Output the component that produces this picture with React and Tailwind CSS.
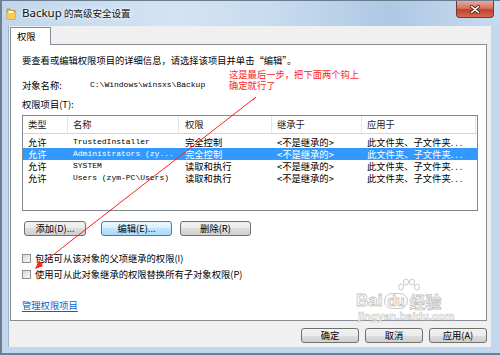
import React from "react";

const rows = [
  { type: "允许", name: "TrustedInstaller", perm: "完全控制", from: "<不是继承的>", to: "此文件夹、子文件夹..." },
  { type: "允许", name: "Administrators (zy...", perm: "完全控制", from: "<不是继承的>", to: "此文件夹、子文件夹...", selected: true },
  { type: "允许", name: "SYSTEM", perm: "读取和执行", from: "<不是继承的>", to: "此文件夹、子文件夹..." },
  { type: "允许", name: "Users (zym-PC\\Users)", perm: "读取和执行", from: "<不是继承的>", to: "此文件夹、子文件夹..." },
];

const btn =
  "h-[15px] rounded-[3px] border border-[#707070] bg-[linear-gradient(#f2f2f2,#ebebeb_50%,#dddddd_50%,#cfcfcf)] flex items-center justify-center leading-none text-[9.3px] text-black";

function Checkbox({ label }) {
  return (
    <div className="flex items-center h-[12px]">
      <span className="w-[9px] h-[9px] border border-[#8e8f8f] bg-[linear-gradient(135deg,#d6d6d6,#fbfbfb)]" />
      <span className="ml-[4px] leading-[12px]">{label}</span>
    </div>
  );
}

export default function App() {
  return (
    <div className="relative w-[500px] h-[355px] overflow-hidden flex flex-col bg-[#c3d8ee] border-b-2 border-l-2 border-[#6f7f90] font-['Noto_Sans_CJK_SC','Noto_Sans',sans-serif] text-[9.3px] text-black">
      {/* title bar */}
      <div className="h-[26px] flex items-start bg-[linear-gradient(90deg,#c0d6ec,#d3e3f3_35%,#c7dbef_55%,#aec8e4_78%,#c8dbef)] border-t border-[#6a7c8e]">
        <div className="h-[24px] flex items-center pl-[4px]">
          <svg width="10" height="13" viewBox="0 0 10 13">
            <path d="M1 2h3l1 1.5h4v9H1z" fill="#e8b83a" stroke="#b8861c" strokeWidth="0.8" />
            <rect x="2.5" y="4" width="5" height="7" fill="#fffbe9" />
            <path d="M1 6h8v6.5H1z" fill="#f4cd58" />
          </svg>
          <span className="ml-[6px] leading-none text-[9.5px] text-[#111] [text-shadow:0_0_6px_#ffffff,0_0_3px_#ffffff]">
            <span className="font-['Noto_Sans',sans-serif] text-[11.5px]">Backup</span> 的高级安全设置
          </span>
        </div>
        <div className="ml-auto mr-[6px] w-[38px] h-[17px] rounded-b-[4px] border border-t-0 border-[#6d3a33] bg-[linear-gradient(#e7ab9d,#d6735f_45%,#c2412d_55%,#d56a52)] flex items-center justify-center">
          <svg width="12" height="9" viewBox="0 0 12 9">
            <path d="M2.5 1.5l7 6M9.5 1.5l-7 6" stroke="#5a2018" strokeWidth="3.2" strokeLinecap="round" />
            <path d="M2.5 1.5l7 6M9.5 1.5l-7 6" stroke="#ffffff" strokeWidth="1.6" strokeLinecap="round" />
          </svg>
        </div>
      </div>

      {/* client area */}
      <div className="flex-1 ml-[6px] mr-[9px] mb-[6px] bg-[#f0f0f0] border-l border-[#a4b4c4] flex flex-col pt-[1px]">
        <div className="ml-[1px] flex">
          <div className="relative z-10 -mb-px w-[41px] h-[18px] bg-white border border-b-0 border-[#898c95] pl-[6px] flex items-center leading-none">
            权限
          </div>
        </div>
        <div className="ml-[1px] mr-[4px] h-[277px] bg-white border border-[#898c95] flex flex-col pl-[11px] pt-[9px]">
          <div className="h-[12px] leading-[12px]">要查看或编辑权限项目的详细信息，请选择该项目并单击“编辑”。</div>
          <div className="mt-[13px] h-[12px] flex items-center">
            <span className="w-[68px] leading-[12px]">对象名称:</span>
            <span className="font-['Liberation_Mono',monospace] text-[8px] leading-[12px]">{"C:\\Windows\\winsxs\\Backup"}</span>
          </div>
          <div className="mt-[7px] h-[12px] leading-[12px]">权限项目(T):</div>

          {/* list view */}
          <div className="mt-[5px] w-[456px] h-[96px] border border-[#828790] flex flex-col">
            <div className="h-[18px] grid grid-cols-[45px_111px_93px_90px_1fr] border-b border-[#d5d5d5] text-[#222]">
              <div className="pl-[5px] flex items-center border-r border-[#e5e5e5]">类型</div>
              <div className="pl-[5px] flex items-center border-r border-[#e5e5e5]">名称</div>
              <div className="pl-[6px] flex items-center border-r border-[#e5e5e5]">权限</div>
              <div className="pl-[5px] flex items-center border-r border-[#e5e5e5]">继承于</div>
              <div className="pl-[5px] flex items-center border-r border-[#e5e5e5] mr-[1px]">应用于</div>
            </div>
            <div className="pt-[2px] flex flex-col">
              {rows.map((r) => (
                <div
                  key={r.name}
                  className={
                    "h-[12px] grid grid-cols-[45px_111px_93px_90px_1fr] items-center leading-[12px] " +
                    (r.selected ? "bg-[#3399ff] text-white" : "text-black")
                  }
                >
                  <div className="pl-[5px]">{r.type}</div>
                  <div className="pl-[5px] font-['Liberation_Mono',monospace] text-[8px] whitespace-pre">{r.name}</div>
                  <div className="pl-[6px]">{r.perm}</div>
                  <div className="pl-[5px]">{r.from}</div>
                  <div className="pl-[5px] whitespace-nowrap">
                    此文件夹、子文件夹<span className="tracking-[2px]">...</span>
                  </div>
                </div>
              ))}
            </div>
          </div>

          <div className="mt-[10px] flex">
            <div className={btn + " ml-[2px] w-[62px]"}>添加(D)...</div>
            <div className="ml-[15px] w-[71px] h-[15px] rounded-[3px] border border-[#3c7fb1] bg-[linear-gradient(#eaf6fd,#d9f0fc_50%,#bee6fd_50%,#a7d9f5)] flex items-center justify-center leading-none">
              编辑(E)...
            </div>
            <div className={btn + " ml-[8px] w-[71px]"}>删除(R)</div>
          </div>

          <div className="mt-[16px]">
            <Checkbox label="包括可从该对象的父项继承的权限(I)" />
          </div>
          <div className="mt-[4px]">
            <Checkbox label="使用可从此对象继承的权限替换所有子对象权限(P)" />
          </div>
          <div className="mt-[19px] h-[12px] leading-[12px] text-[#0066cc] underline underline-offset-2">管理权限项目</div>
        </div>

        <div className="mt-[7px] mr-[4px] flex justify-end gap-[6px]">
          <div className={btn + " w-[58px]"}>确定</div>
          <div className={btn + " w-[58px]"}>取消</div>
          <div className={btn + " w-[58px]"}>应用(A)</div>
        </div>
      </div>

      {/* annotation */}
      <div className="absolute left-[227px] top-[69px] text-[#ff1a1a] leading-[10.5px] text-[9.3px]">
        <div>这是最后一步，把下面两个钩上</div>
        <div>确定就行了</div>
      </div>
      <svg className="absolute left-0 top-0 pointer-events-none" width="500" height="355">
        <path d="M251 100 L254 97" stroke="#ff2020" strokeWidth="1" fill="none" />
        <line x1="254" y1="97" x2="38" y2="265" stroke="#ff2020" strokeWidth="1" />
        <polygon points="33,269 37,260 41,266" fill="#ff2020" />
      </svg>

      {/* watermark */}
      <div className="absolute left-[354px] top-[278px] pointer-events-none opacity-90">
        <svg className="ml-[40px]" width="26" height="16" viewBox="0 0 26 16">
          <g fill="#ffffff" stroke="#c4c4c4" strokeWidth="1">
            <ellipse cx="5" cy="9" rx="2.5" ry="3" />
            <ellipse cx="10" cy="4" rx="2.5" ry="3" />
            <ellipse cx="16" cy="4" rx="2.5" ry="3" />
            <ellipse cx="21" cy="9" rx="2.5" ry="3" />
          </g>
        </svg>
        <div className="flex items-end -mt-[2px] font-['Liberation_Sans',sans-serif] font-bold text-[17px] leading-none text-white [-webkit-text-stroke:0.8px_#bcbcbc]">
          <span>Bai</span>
          <span className="ml-[2px] text-[14px] px-[2px] rounded-full border border-[#c4c4c4]">du</span>
          <span className="ml-[2px] font-['Noto_Sans_CJK_SC',sans-serif] text-[16px]">经验</span>
        </div>
        <div className="mt-[2px] ml-[2px] font-['Liberation_Sans',sans-serif] font-bold text-[11px] leading-none text-white [-webkit-text-stroke:0.6px_#c4c4c4]">
          jingyan.baidu.com
        </div>
      </div>
    </div>
  );
}
